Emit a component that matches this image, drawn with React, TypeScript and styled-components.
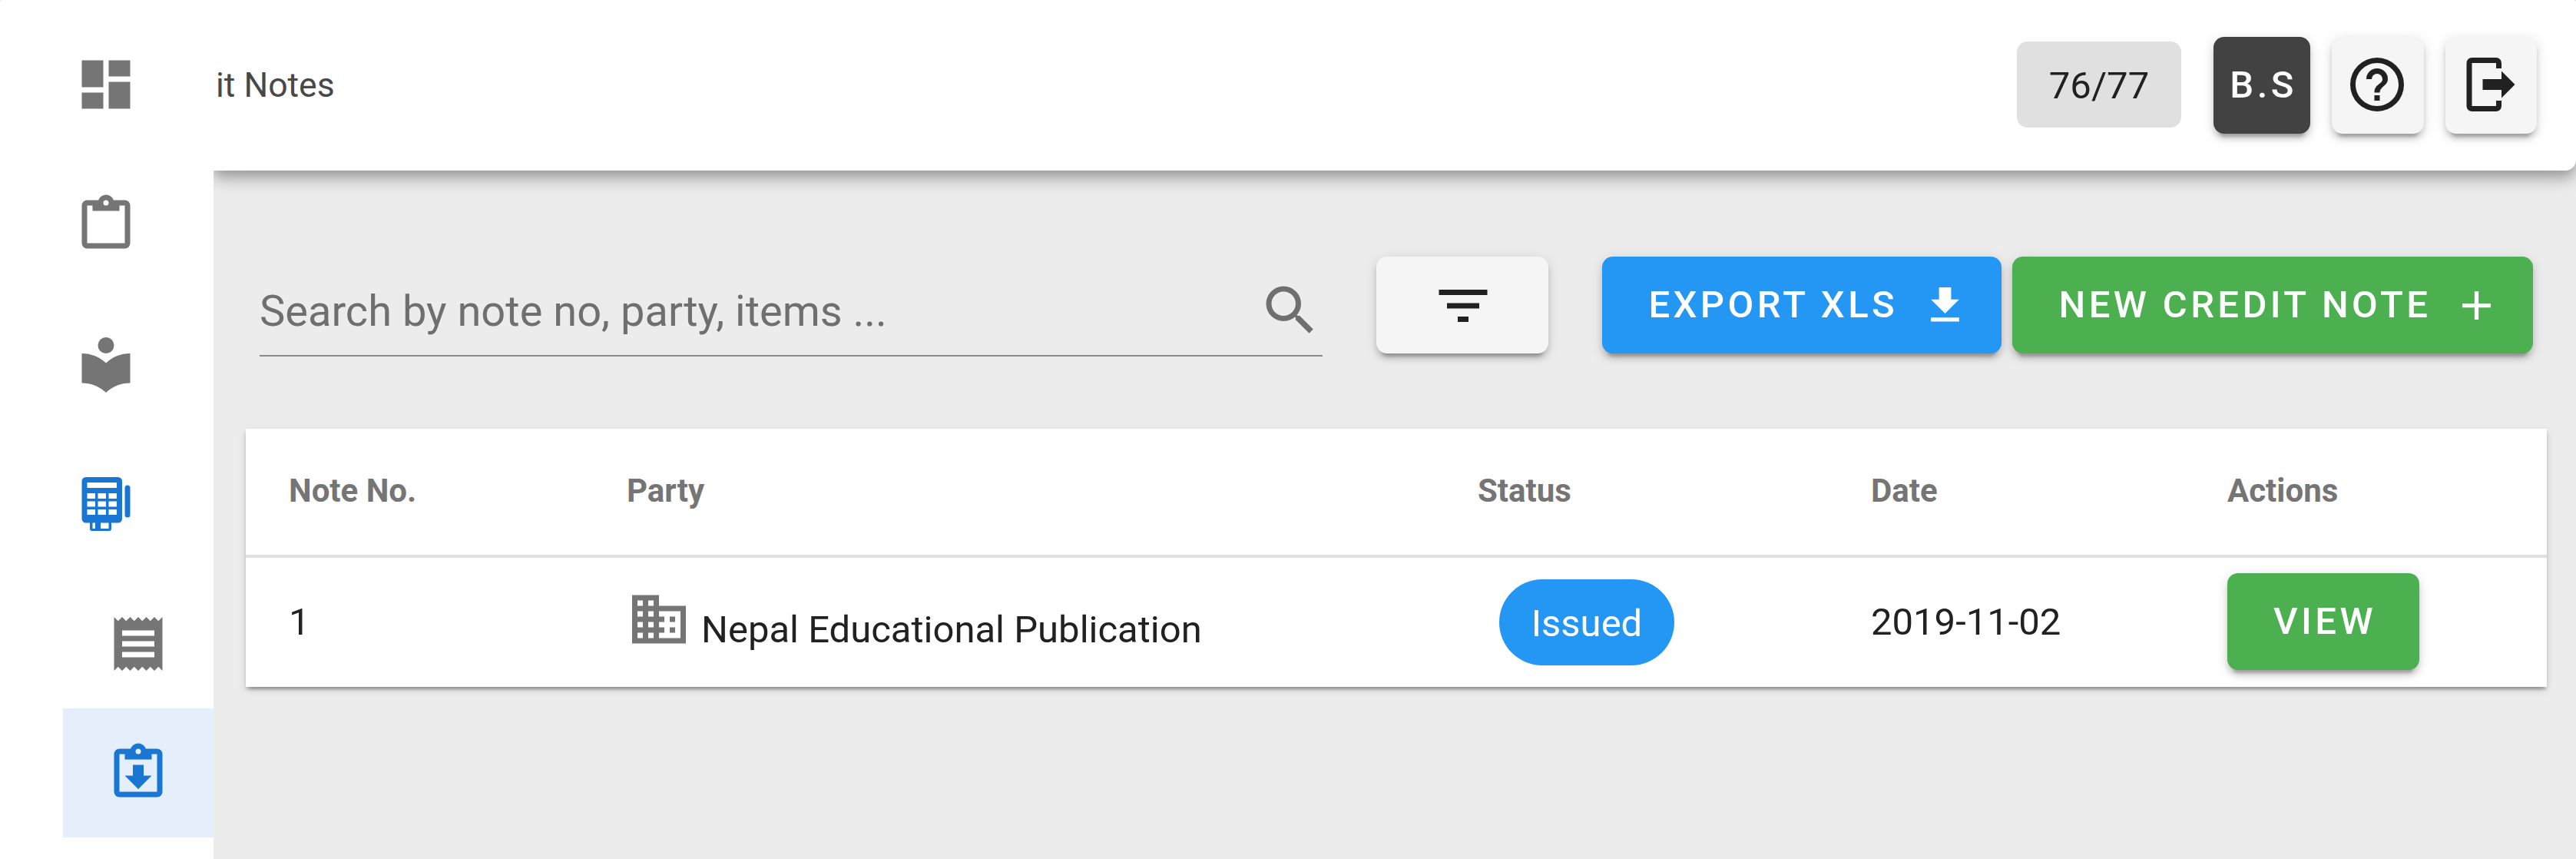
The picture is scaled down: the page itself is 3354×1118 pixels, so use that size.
import React from "react";
import styled, { createGlobalStyle } from "styled-components";

const GlobalStyle = createGlobalStyle`
  *, *::before, *::after { box-sizing: border-box; }
  html, body { margin: 0; padding: 0; background: #ececec; }
  body, button, input { font-family: Roboto, "Liberation Sans", sans-serif; }
`;

const elevation1 =
  "0 7px 3.5px -3.5px rgba(0,0,0,.2), 0 3.5px 3.5px 0 rgba(0,0,0,.14), 0 3.5px 10.5px 0 rgba(0,0,0,.12)";
const elevation2 =
  "0 10.5px 3.5px -7px rgba(0,0,0,.2), 0 7px 7px 0 rgba(0,0,0,.14), 0 3.5px 17.5px 0 rgba(0,0,0,.12)";
const elevation4 =
  "0 7px 14px -3.5px rgba(0,0,0,.2), 0 14px 17.5px 0 rgba(0,0,0,.14), 0 3.5px 35px 0 rgba(0,0,0,.12)";

const paths = {
  dashboard: "M13,3V9H21V3M13,21H21V11H13M3,21H11V15H3M3,13H11V3H3V13Z",
  clipboard:
    "M19,3H14.82C14.4,1.84 13.3,1 12,1C10.7,1 9.6,1.84 9.18,3H5A2,2 0 0,0 3,5V19A2,2 0 0,0 5,21H19A2,2 0 0,0 21,19V5A2,2 0 0,0 19,3M12,3A1,1 0 0,1 13,4A1,1 0 0,1 12,5A1,1 0 0,1 11,4A1,1 0 0,1 12,3M7,7H17V5H19V19H5V5H7V7Z",
  clipboardDown:
    "M12,18L7,13H10V9H14V13H17L12,18M19,3H14.82C14.4,1.84 13.3,1 12,1C10.7,1 9.6,1.84 9.18,3H5A2,2 0 0,0 3,5V19A2,2 0 0,0 5,21H19A2,2 0 0,0 21,19V5A2,2 0 0,0 19,3M12,3A1,1 0 0,1 13,4A1,1 0 0,1 12,5A1,1 0 0,1 11,4A1,1 0 0,1 12,3M7,7H17V5H19V19H5V5H7V7Z",
  library:
    "M12,8A3,3 0 0,0 15,5A3,3 0 0,0 12,2A3,3 0 0,0 9,5A3,3 0 0,0 12,8M12,11.54C9.64,9.35 6.5,8 3,8V19C6.5,19 9.64,20.35 12,22.54C14.36,20.35 17.5,19 21,19V8C17.5,8 14.36,9.35 12,11.54Z",
  register:
    "M4.5,2H16.5A1.5,1.5 0 0,1 18,3.5V17.5A1.5,1.5 0 0,1 16.5,19H14V21.3A0.7,0.7 0 0,1 13.3,22H6.7A0.7,0.7 0 0,1 6,21.3V19H4.5A1.5,1.5 0 0,1 3,17.5V3.5A1.5,1.5 0 0,1 4.5,2ZM5,4V6H16V4ZM5,8V10H8V8ZM9,8V10H12V8ZM13,8V10H16V8ZM5,11V13H8V11ZM9,11V13H12V11ZM13,11V13H16V11ZM5,14V16H8V14ZM9,14V16H12V14ZM13,14V16H16V14ZM7,19V21.15H8V19ZM10,19V21.15H13V19ZM20,5A1,1 0 0,1 21,6V16A1,1 0 0,1 19,16V6A1,1 0 0,1 20,5Z",
  receipt:
    "M3,22L4.5,20.5L6,22L7.5,20.5L9,22L10.5,20.5L12,22L13.5,20.5L15,22L16.5,20.5L18,22L19.5,20.5L21,22V2L19.5,3.5L18,2L16.5,3.5L15,2L13.5,3.5L12,2L10.5,3.5L9,2L7.5,3.5L6,2L4.5,3.5L3,2M18,9H6V7H18M18,13H6V11H18M18,17H6V15H18V17Z",
  help: "M11,18H13V16H11V18M12,2A10,10 0 0,0 2,12A10,10 0 0,0 12,22A10,10 0 0,0 22,12A10,10 0 0,0 12,2M12,20C7.59,20 4,16.41 4,12C4,7.59 7.59,4 12,4C16.41,4 20,7.59 20,12C20,16.41 16.41,20 12,20M12,6A4,4 0 0,0 8,10H10A2,2 0 0,1 12,8A2,2 0 0,1 14,10C14,12 11,11.75 11,15H13C13,12.75 16,12.5 16,10A4,4 0 0,0 12,6Z",
  logout:
    "M16,17V14H9V10H16V7L21,12L16,17M14,2A2,2 0 0,1 16,4V6H14V4H5V20H14V18H16V20A2,2 0 0,1 14,22H5A2,2 0 0,1 3,20V4A2,2 0 0,1 5,2H14Z",
  magnify:
    "M9.5,3A6.5,6.5 0 0,1 16,9.5C16,11.11 15.41,12.59 14.44,13.73L14.71,14H15.5L20.5,19L19,20.5L14,15.5V14.71L13.73,14.44C12.59,15.41 11.11,16 9.5,16A6.5,6.5 0 0,1 3,9.5A6.5,6.5 0 0,1 9.5,3M9.5,5C7,5 5,7 5,9.5C5,12 7,14 9.5,14C12,14 14,12 14,9.5C14,7 12,5 9.5,5Z",
  filter: "M6,13H18V11H6M3,6V8H21V6M10,18H14V16H10V18Z",
  download: "M5,20H19V18H5M19,9H15V3H9V9H5L12,16L19,9Z",
  plus: "M19,13H13V19H11V13H5V11H11V5H13V11H19V13Z",
  domain:
    "M18,15H16V17H18M18,11H16V13H18M20,19H12V17H14V15H12V13H14V11H12V9H20M10,7H8V5H10M10,11H8V9H10M10,15H8V13H10M10,19H8V17H10M6,7H4V5H6M6,11H4V9H6M6,15H4V13H6M6,19H4V17H6M12,7V3H2V21H22V7H12Z",
};

const IconSvg = styled.svg<{ $size: number }>`
  display: block;
  flex: none;
  width: ${(p) => p.$size}px;
  height: ${(p) => p.$size}px;
  fill: currentColor;
  fill-rule: evenodd;
`;

const Icon = ({ name, size = 84 }: { name: keyof typeof paths; size?: number }) => (
  <IconSvg viewBox="0 0 24 24" $size={size} aria-hidden="true">
    <path d={paths[name]} />
  </IconSvg>
);

const Shell = styled.div`
  display: grid;
  grid-template-columns: 278px 1fr;
  width: 3354px;
  height: 1118px;
  overflow: hidden;
  background: #ececec;
`;

const Sidebar = styled.nav`
  position: relative;
  z-index: 2;
  display: flex;
  flex-direction: column;
  align-items: flex-end;
  gap: 14px;
  padding-top: 25.7px;
  background: #fff;
  border-top-left-radius: 4px;
`;

const NavItem = styled.a<{ $active?: boolean }>`
  display: flex;
  align-items: center;
  width: 100%;
  height: 168px;
  flex: none;
  padding-left: 96px;
  color: ${(p) => (p.$active ? "#1976d2" : "#757575")};
`;

const SubNav = styled.div`
  display: flex;
  flex-direction: column;
  width: 196px;
`;

const SubItem = styled(NavItem)`
  padding-left: 56px;
  background: ${(p) => (p.$active ? "#e4effb" : "transparent")};
`;

const Content = styled.div`
  display: flex;
  flex-direction: column;
  min-width: 0;
`;

const AppBar = styled.header`
  display: flex;
  align-items: center;
  height: 222px;
  padding: 0 51px 2px 3px;
  background: #fff;
  border-radius: 0 4px 14px 0;
  box-shadow: ${elevation4};
`;

const Title = styled.h1`
  flex: 1;
  margin: 0;
  padding-top: 2px;
  font-size: 44.5px;
  font-weight: 400;
  line-height: 60px;
  color: #484848;
`;

const Counter = styled.span`
  display: flex;
  align-items: center;
  justify-content: center;
  width: 214px;
  height: 112px;
  padding-top: 2px;
  margin-right: 42px;
  border-radius: 14px;
  background: #e0e0e0;
  color: #212121;
  font-size: 49px;
`;

const tones = {
  dark: ["#424242", "#fff"],
  light: ["#f5f5f5", "#212121"],
  blue: ["#2496f3", "#fff"],
  green: ["#4caf50", "#fff"],
};

const Button = styled.button<{ $tone: keyof typeof tones; $width: number }>`
  display: flex;
  align-items: center;
  justify-content: center;
  flex: none;
  width: ${(p) => p.$width}px;
  height: 126px;
  padding: 0 0 0 4px;
  border: 0;
  border-radius: 14px;
  background: ${(p) => tones[p.$tone][0]};
  color: ${(p) => tones[p.$tone][1]};
  box-shadow: ${elevation2};
  font-size: 49px;
  font-weight: 500;
  line-height: 58px;
  letter-spacing: 0.0892857em;
  white-space: nowrap;
`;

const BarIconButton = styled(Button)`
  padding: 0 2px 2px 0;
`;

const FilterButton = styled(Button)`
  padding: 2px 0 0 2px;
`;

const LabelledButton = styled(Button)`
  justify-content: space-between;
  padding: 0 42px 0 60.5px;
`;

const BarActions = styled.div`
  display: flex;
  gap: 28px;
  padding-top: 2px;
`;

const Main = styled.main`
  display: flex;
  flex-direction: column;
  gap: 94px;
  padding: 112px 38px 0 42px;
`;

const Toolbar = styled.div`
  display: flex;
  align-items: flex-start;
  padding: 0 18px;
`;

const SearchField = styled.label`
  display: flex;
  align-items: center;
  width: 1384px;
  height: 130px;
  padding-top: 11px;
  margin-right: 70px;
  border-bottom: 2px solid #8a8a8a;
  color: #6f6f6f;
`;

const SearchInput = styled.input`
  flex: 1;
  min-width: 0;
  padding: 3px 0 0;
  border: 0;
  outline: 0;
  background: transparent;
  font-size: 56px;
  line-height: 70px;
  color: #212121;
  &::placeholder { color: #6f6f6f; opacity: 1; }
`;

const ButtonGroup = styled.div`
  display: flex;
  gap: 14px;
  margin-left: 70px;
`;

const Card = styled.section`
  background: #fff;
  box-shadow: ${elevation1};
`;

const Row = styled.div`
  display: grid;
  grid-template-columns: 440px 1108px 512px 464px 472px;
  height: 168px;
`;

const HeadRow = styled(Row)`
  border-bottom: 4px solid #e0e0e0;
`;

const HeadCell = styled.div`
  display: flex;
  align-items: center;
  padding: 0 56px 4px;
  font-size: 42px;
  font-weight: 700;
  color: #757575;
`;

const Cell = styled.div`
  display: flex;
  align-items: center;
  padding: 0 0 2px 56px;
  font-size: 49px;
  color: #212121;
  white-space: nowrap;
`;

const Party = styled.div`
  display: flex;
  align-items: center;
  gap: 13px;
  color: #757575;
  padding-bottom: 6px;
`;

const PartyName = styled.span`
  padding-top: 26px;
  color: #212121;
`;

const StatusChip = styled.span`
  display: flex;
  align-items: center;
  justify-content: center;
  width: 228px;
  height: 112px;
  margin: 2px 0 0 28px;
  padding-top: 2px;
  border-radius: 56px;
  background: #2496f3;
  color: #fff;
`;

export default function App() {
  return (
    <>
      <GlobalStyle />
      <Shell>
        <Sidebar>
          <NavItem><Icon name="dashboard" /></NavItem>
          <NavItem><Icon name="clipboard" /></NavItem>
          <NavItem><Icon name="library" /></NavItem>
          <NavItem $active><Icon name="register" /></NavItem>
          <SubNav>
            <SubItem><Icon name="receipt" /></SubItem>
            <SubItem $active><Icon name="clipboardDown" /></SubItem>
          </SubNav>
        </Sidebar>
        <Content>
          <AppBar>
            <Title>it Notes</Title>
            <Counter>76/77</Counter>
            <BarActions>
              <Button $tone="dark" $width={126}>B.S</Button>
              <BarIconButton $tone="light" $width={120}><Icon name="help" /></BarIconButton>
              <BarIconButton $tone="light" $width={119}><Icon name="logout" /></BarIconButton>
            </BarActions>
          </AppBar>
          <Main>
            <Toolbar>
              <SearchField>
                <SearchInput placeholder="Search by note no, party, items ..." />
                <Icon name="magnify" />
              </SearchField>
              <FilterButton $tone="light" $width={224}><Icon name="filter" /></FilterButton>
              <ButtonGroup>
                <LabelledButton $tone="blue" $width={520}>
                  EXPORT XLS
                  <Icon name="download" size={63} />
                </LabelledButton>
                <LabelledButton $tone="green" $width={678}>
                  NEW CREDIT NOTE
                  <Icon name="plus" size={63} />
                </LabelledButton>
              </ButtonGroup>
            </Toolbar>
            <Card>
              <HeadRow>
                <HeadCell>Note No.</HeadCell>
                <HeadCell>Party</HeadCell>
                <HeadCell>Status</HeadCell>
                <HeadCell>Date</HeadCell>
                <HeadCell>Actions</HeadCell>
              </HeadRow>
              <Row>
                <Cell>1</Cell>
                <Cell>
                  <Party>
                    <Icon name="domain" />
                    <PartyName>Nepal Educational Publication</PartyName>
                  </Party>
                </Cell>
                <Cell><StatusChip>Issued</StatusChip></Cell>
                <Cell>2019-11-02</Cell>
                <Cell><Button $tone="green" $width={250}>VIEW</Button></Cell>
              </Row>
            </Card>
          </Main>
        </Content>
      </Shell>
    </>
  );
}
